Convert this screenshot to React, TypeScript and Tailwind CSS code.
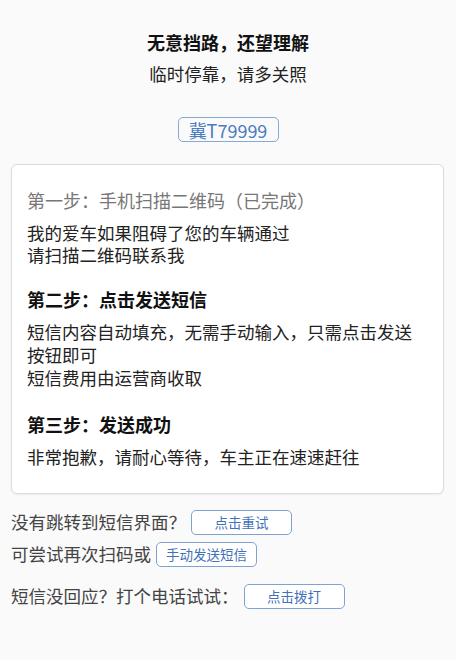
const FONT = { fontFamily: '"Noto Sans CJK SC", "Noto Sans", sans-serif' };

function Btn({ label }: { label: string }) {
  return (
    <button
      type="button"
      className="ml-[5px] flex h-[25px] w-[101px] items-center justify-center rounded-[5px] border border-[#7ea3d2] bg-white text-[13.5px] text-[#3f72b8]"
    >
      {label}
    </button>
  );
}

export default function App() {
  return (
    <div className="min-h-[660px] w-[456px] bg-[#fafafa] text-[#222]" style={FONT}>
      <div className="flex flex-col items-center pt-[29px]">
        <h1 className="text-[18px] font-bold leading-[26px] text-[#111]">无意挡路，还望理解</h1>
        <p className="mt-[6px] text-[17.5px] leading-[26px] text-[#222]">临时停靠，请多关照</p>
        <div className="mt-[30px] flex h-[25px] w-[101px] items-center justify-center rounded-[5px] border border-[#86a9d6] text-[18px] leading-none text-[#4a7cc0]">
          冀T79999
        </div>
      </div>

      <div className="ml-[11px] mr-[12px] mt-[22px] rounded-[6px] border border-[#dcdcdc] bg-white px-[15px] pb-[25px] pt-[24px] shadow-[0_1px_2px_rgba(0,0,0,0.06)]">
        <section>
          <h3 className="text-[18px] leading-[22px] text-[#777]">第一步：手机扫描二维码（已完成）</h3>
          <p className="mt-[11px] text-[17.5px] leading-[22px]">
            我的爱车如果阻碍了您的车辆通过
            <br />
            请扫描二维码联系我
          </p>
        </section>
        <section className="mt-[22px]">
          <h3 className="text-[18px] font-bold leading-[22px] text-[#111]">第二步：点击发送短信</h3>
          <p className="mt-[10px] whitespace-nowrap text-[17.5px] leading-[23px]">
            短信内容自动填充，无需手动输入，只需点击发送
            <br />
            按钮即可
            <br />
            短信费用由运营商收取
          </p>
        </section>
        <section className="mt-[24px]">
          <h3 className="text-[18px] font-bold leading-[22px] text-[#111]">第三步：发送成功</h3>
          <p className="mt-[11px] text-[17.5px] leading-[22px]">非常抱歉，请耐心等待，车主正在速速赶往</p>
        </section>
      </div>

      <div className="mt-[12px] px-[11px] text-[17.5px] text-[#444]">
        <div className="flex h-[32px] items-center">
          <span>没有跳转到短信界面？</span>
          <Btn label="点击重试" />
        </div>
        <div className="flex h-[32px] items-center">
          <span>可尝试再次扫码或</span>
          <Btn label="手动发送短信" />
        </div>
        <div className="mt-[10px] flex h-[32px] items-center">
          <span>短信没回应？打个电话试试：</span>
          <Btn label="点击拨打" />
        </div>
      </div>
    </div>
  );
}
